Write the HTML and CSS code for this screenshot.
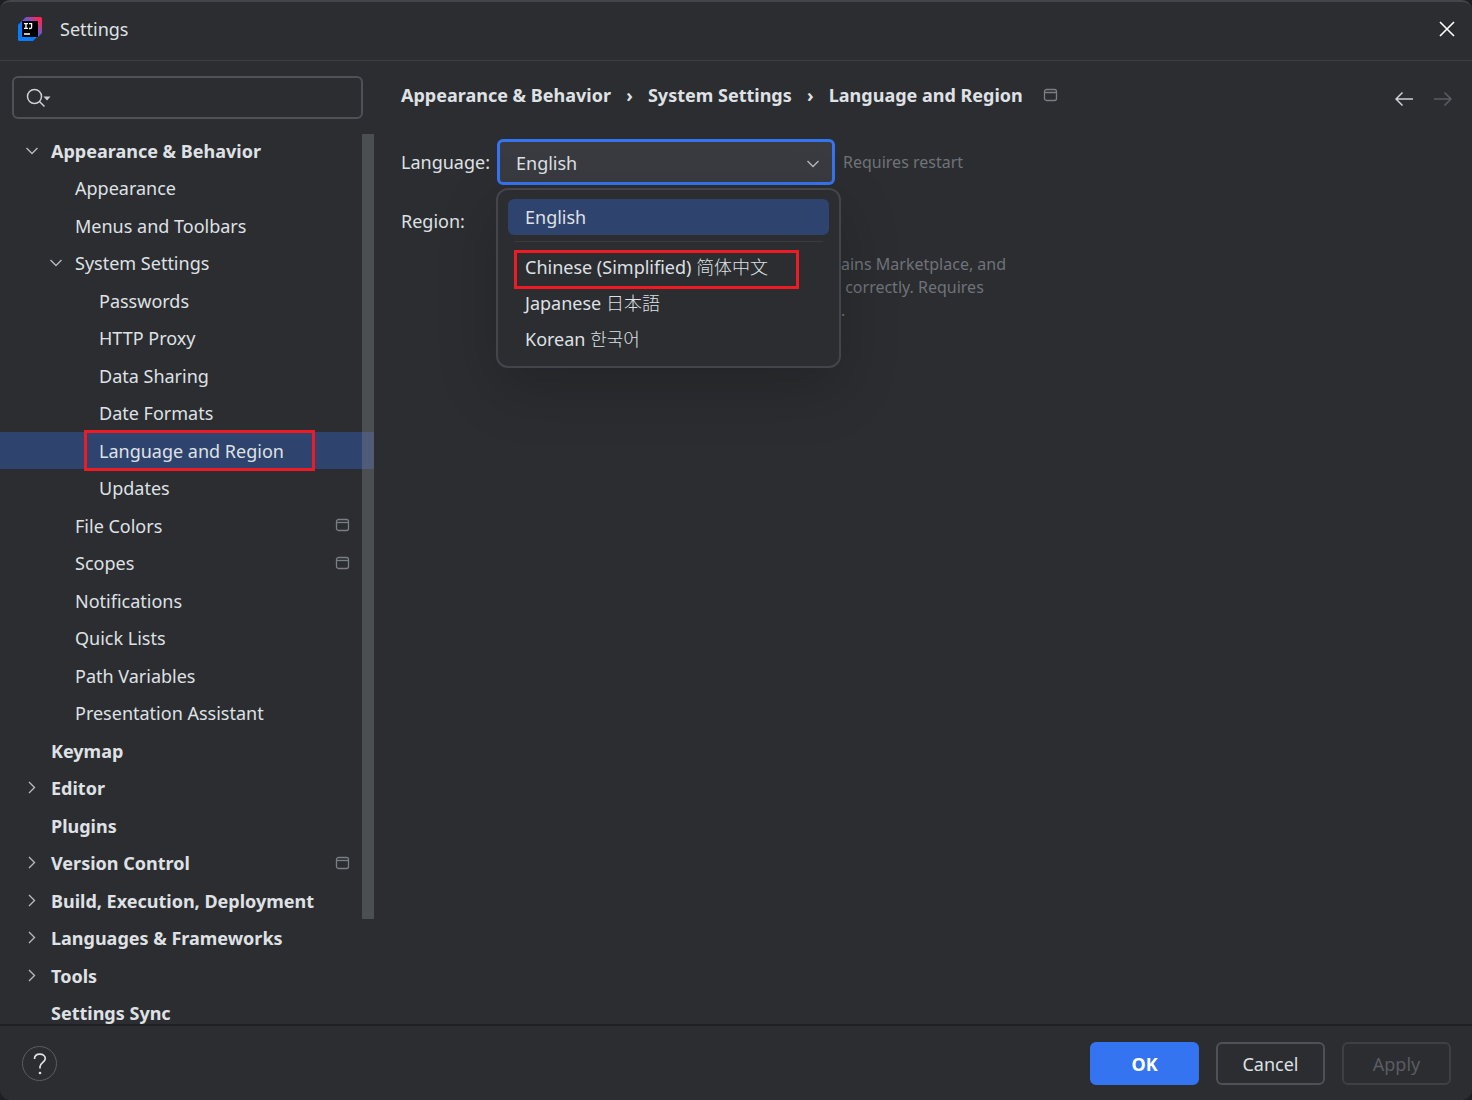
FILE: index.html
```html
<!DOCTYPE html>
<html lang="en">
<head>
<meta charset="utf-8">
<title>Settings</title>
<link rel="stylesheet" href="styles.css">
</head>
<body>
<svg class="defs" aria-hidden="true">
  <symbol id="down" viewBox="0 0 14 14"><path d="M1.500 4 7 9.500 12.500 4" fill="none" stroke="currentColor" stroke-width="1.400"/></symbol>
  <symbol id="right" viewBox="0 0 14 14"><path d="M4 1 9.500 6.500 4 12" fill="none" stroke="currentColor" stroke-width="1.400"/></symbol>
  <symbol id="project" viewBox="0 0 15 15"><rect x="1.500" y="1.500" width="12" height="11" rx="2" fill="none" stroke="currentColor" stroke-width="1.300"/><path d="M1.500 4.500h12" stroke="currentColor" stroke-width="1.300"/></symbol>
</svg>
<div class="window">
  <header class="titlebar">
    <svg class="logo" viewBox="0 0 24 24" aria-hidden="true">
      <defs>
        <linearGradient id="warm" x1="0.200" y1="0.300" x2="0.800" y2="0.100"><stop offset="0" stop-color="#6b57d2"/><stop offset="1" stop-color="#ff2456"/></linearGradient>
        <linearGradient id="cool" x1="0" y1="0" x2="0" y2="1"><stop offset="0" stop-color="#ff2456"/><stop offset="1" stop-color="#3b6cf0"/></linearGradient>
      </defs>
      <path d="M0 8 4 4h15v16l-4 4H1.500A1.500 1.500 0 0 1 0 22.500Z" fill="#087cfa"/>
      <path d="M3 5 8 0h14.500A1.500 1.500 0 0 1 24 1.500V6H3Z" fill="url(#warm)"/>
      <path d="M19 4h5v12l-5 5Z" fill="url(#cool)"/>
      <path d="M4 4h16v16H4z" fill="#000"/>
      <path d="M6 6.700h4M8 6.700v5M6 11.300h4M11 6.700h2.600v3.500q0 1.300-1.400 1.300h-1.200M6 17h6" fill="none" stroke="#fff" stroke-width="1.300"/>
    </svg>
    <h1 class="title">Settings</h1>
    <button class="icon-button close" aria-label="Close"><svg width="16" height="16" viewBox="0 0 16 16"><path d="m1 1 14 14M15 1 1 15" stroke="currentColor" stroke-width="1.600"/></svg></button>
  </header>

  <main class="body">
    <aside class="sidebar">
      <div class="search">
        <svg width="26" height="20" viewBox="0 0 26 20" aria-hidden="true"><circle cx="8.500" cy="8.500" r="7" fill="none" stroke="currentColor" stroke-width="1.500"/><path d="m13.500 13.500 5 5" stroke="currentColor" stroke-width="1.500"/><path d="M17.500 8.500h7L21 12.500Z" fill="currentColor"/></svg>
        <input type="text" aria-label="Search settings">
      </div>
      <nav class="tree-pane" aria-label="Settings">
        <ul class="tree">
          <li class="row group"><svg class="arrow"><use href="#down"/></svg><a href="#">Appearance &amp; Behavior</a></li>
          <li class="row level-2"><a href="#">Appearance</a></li>
          <li class="row level-2"><a href="#">Menus and Toolbars</a></li>
          <li class="row level-2"><svg class="arrow"><use href="#down"/></svg><a href="#">System Settings</a></li>
          <li class="row level-3"><a href="#">Passwords</a></li>
          <li class="row level-3"><a href="#">HTTP Proxy</a></li>
          <li class="row level-3"><a href="#">Data Sharing</a></li>
          <li class="row level-3"><a href="#">Date Formats</a></li>
          <li class="row level-3 selected"><a href="#" aria-current="page">Language and Region</a><span class="marker"></span></li>
          <li class="row level-3"><a href="#">Updates</a></li>
          <li class="row level-2"><a href="#">File Colors</a><svg class="scope"><use href="#project"/></svg></li>
          <li class="row level-2"><a href="#">Scopes</a><svg class="scope"><use href="#project"/></svg></li>
          <li class="row level-2"><a href="#">Notifications</a></li>
          <li class="row level-2"><a href="#">Quick Lists</a></li>
          <li class="row level-2"><a href="#">Path Variables</a></li>
          <li class="row level-2"><a href="#">Presentation Assistant</a></li>
          <li class="row group"><a href="#">Keymap</a></li>
          <li class="row group"><svg class="arrow"><use href="#right"/></svg><a href="#">Editor</a></li>
          <li class="row group"><a href="#">Plugins</a></li>
          <li class="row group"><svg class="arrow"><use href="#right"/></svg><a href="#">Version Control</a><svg class="scope"><use href="#project"/></svg></li>
          <li class="row group"><svg class="arrow"><use href="#right"/></svg><a href="#">Build, Execution, Deployment</a></li>
          <li class="row group"><svg class="arrow"><use href="#right"/></svg><a href="#">Languages &amp; Frameworks</a></li>
          <li class="row group"><svg class="arrow"><use href="#right"/></svg><a href="#">Tools</a></li>
          <li class="row group"><a href="#">Settings Sync</a></li>
        </ul>
        <div class="scrollbar"></div>
      </nav>
    </aside>

    <section class="content">
      <div class="content-head">
        <nav class="breadcrumbs" aria-label="Breadcrumbs">
          <a href="#">Appearance &amp; Behavior</a><span class="sep">›</span><a href="#">System Settings</a><span class="sep">›</span><a href="#">Language and Region</a>
          <svg class="scope"><use href="#project"/></svg>
        </nav>
        <div class="history">
          <button class="icon-button" aria-label="Back"><svg width="18" height="14" viewBox="0 0 18 14"><path d="M18 7H1M7.500.500 1 7l6.500 6.500" fill="none" stroke="currentColor" stroke-width="1.500"/></svg></button>
          <button class="icon-button" aria-label="Forward" disabled><svg width="18" height="14" viewBox="0 0 18 14"><path d="M0 7h17M10.500.500 17 7l-6.500 6.500" fill="none" stroke="currentColor" stroke-width="1.500"/></svg></button>
        </div>
      </div>
      <div class="form">
        <label for="language">Language:</label>
        <div class="combo">
          <select id="language"><option>English</option></select>
          <svg class="arrow"><use href="#down"/></svg>
          <ul class="popup" role="listbox" aria-label="Language">
            <li class="option active" role="option" aria-selected="true">English</li>
            <li class="divider" role="separator"></li>
            <li class="option" role="option">Chinese (Simplified) <span class="native" lang="zh">简体中文</span><span class="marker"></span></li>
            <li class="option" role="option">Japanese <span class="native" lang="ja">日本語</span></li>
            <li class="option" role="option">Korean <span class="native" lang="ko">한국어</span></li>
          </ul>
        </div>
        <span class="hint">Requires restart</span>
        <span class="region-label">Region:</span>
        <p class="hint region-hint">ains Marketplace, and
 correctly. Requires
.</p>
      </div>
    </section>
  </main>

  <footer class="footer">
    <button class="help" aria-label="Help"><svg width="14" height="22" viewBox="0 0 14 22"><path d="M1.500 6C1.500 3 3.700 1.200 6.800 1.200S12.300 3 12.300 5.600c0 3.600-5.300 4-5.300 8.200v1.700" fill="none" stroke="currentColor" stroke-width="1.700"/><circle cx="7" cy="20" r="1.300" fill="currentColor"/></svg></button>
    <div class="actions">
      <button class="button primary">OK</button>
      <button class="button">Cancel</button>
      <button class="button" disabled>Apply</button>
    </div>
  </footer>
</div>
</body>
</html>
```
FILE: styles.css
```css
* { box-sizing: border-box; }

body {
  margin: 0;
  background: #1e1f22;
  color: #dfe1e5;
  font: 18px/24px "Noto Sans", "Open Sans", "Noto Sans CJK SC", sans-serif;
}

a { color: inherit; text-decoration: none; }
ul { list-style: none; margin: 0; padding: 0; }
button, input, select { font: inherit; color: inherit; }
.defs { position: absolute; width: 0; height: 0; }

.window {
  display: flex;
  flex-direction: column;
  height: 100vh;
  overflow: hidden;
  background: #2b2d30;
  border-top: 2px solid #43454a;
  border-radius: 10px;
}

.titlebar {
  display: flex;
  align-items: center;
  flex: none;
  height: 59px;
  padding: 0 17px 4px 18px;
  border-bottom: 1px solid #3c3e41;
}
.logo { width: 24px; height: 24px; }
.title { margin: 0 auto 0 18px; font-size: 18px; font-weight: 400; }

.icon-button {
  display: flex;
  padding: 0;
  border: 0;
  background: none;
  color: #ced0d6;
}
.icon-button:disabled { color: #5a5d63; }
.close { color: #fff; }

.body { display: flex; flex: 1; min-height: 0; }

.sidebar {
  display: flex;
  flex-direction: column;
  flex: none;
  width: 374px;
  padding-top: 15px;
}
.search {
  display: flex;
  align-items: center;
  flex: none;
  height: 43px;
  margin: 0 11px 13px 12px;
  padding: 0 12px;
  border: 2px solid #4e5157;
  border-radius: 6px;
  color: #ced0d6;
}
.search input {
  flex: 1;
  min-width: 0;
  border: 0;
  outline: 0;
  background: none;
}

.tree-pane { position: relative; flex: 1; min-height: 0; overflow: hidden; }
.row {
  position: relative;
  display: flex;
  align-items: center;
  height: 37px;
  padding-left: 51px;
  padding-right: 24px;
}
.row:nth-child(even) { height: 38px; }
.row.level-2 { padding-left: 75px; }
.row.level-3 { padding-left: 99px; }
.row.group { font-weight: 700; }
.row.selected { background: #2e436e; }
.arrow { flex: none; width: 14px; height: 14px; color: #b4b8bf; }
.row .arrow { margin-left: -26px; margin-right: 12px; }
.scope { flex: none; width: 15px; height: 15px; color: #7a7e85; }
.row .scope { margin-left: auto; }
.scrollbar {
  position: absolute;
  top: 2px;
  right: 0;
  width: 12px;
  height: 88%;
  background: rgba(128, 130, 133, 0.4);
}

/* Red callout frames */
.marker { position: absolute; border: 3px solid #ed1c24; }
.row .marker { left: 84px; top: -2px; width: 231px; height: 41px; }
.option .marker { left: 6px; top: 2px; width: 285px; height: 39px; }

.content { flex: 1; min-width: 0; padding: 20px 20px 0 27px; }
.content-head { display: flex; justify-content: space-between; height: 30px; }
.breadcrumbs { display: flex; align-items: center; height: 28px; font-weight: 700; }
.sep { width: 37px; text-align: center; }
.breadcrumbs .scope { margin-left: 20px; }
.history { display: flex; gap: 21px; align-items: flex-end; height: 25px; }

.form {
  display: grid;
  grid-template-columns: 96px 338px 1fr;
  grid-template-rows: 46px auto auto;
  align-items: center;
  margin-top: 28px;
}
.combo { position: relative; align-self: stretch; }
.combo select {
  width: 100%;
  height: 46px;
  padding: 2px 16px 0;
  border: 3px solid #3574f0;
  border-radius: 6px;
  outline: 0;
  background: #393b40;
  appearance: none;
}
.combo > .arrow { position: absolute; right: 15px; top: 18px; }
.popup {
  position: absolute;
  z-index: 1;
  top: 49px;
  left: -1px;
  width: 345px;
  height: 180px;
  padding: 9px 10px;
  border: 2px solid #43454a;
  border-radius: 12px;
  background: #2b2d30;
  box-shadow: 0 20px 60px rgba(0, 0, 0, 0.2);
}
.option { position: relative; height: 36px; padding: 0 17px; line-height: 36px; white-space: nowrap; }
.option.active { border-radius: 6px; background: #2e436e; }
.divider { height: 1px; margin: 6px 6px 6px; background: #393b40; }
.native { font-family: "Noto Sans CJK SC", sans-serif; font-weight: 300; }
.native:lang(ja) { font-family: "Noto Sans CJK JP", sans-serif; }
.native:lang(ko) { font-family: "Noto Sans CJK KR", sans-serif; }

.hint { padding-left: 8px; font-size: 16px; line-height: 23px; color: #6f737a; }
.region-label { grid-area: 2 / 1; margin-top: 24px; }
.region-hint { grid-area: 3 / 3; margin: 20px 0 0; padding-left: 6px; white-space: pre; }

.footer {
  display: flex;
  align-items: center;
  justify-content: space-between;
  flex: none;
  height: 76px;
  padding: 1px 21px 0 22px;
  border-top: 2px solid #1e1f22;
}
.help {
  display: flex;
  align-items: center;
  justify-content: center;
  width: 35px;
  height: 35px;
  padding: 0;
  border: 1px solid #5a5d63;
  border-radius: 50%;
  background: none;
}
.actions { display: flex; gap: 17px; }
.button {
  width: 109px;
  height: 43px;
  padding: 0;
  border: 2px solid #4e5157;
  border-radius: 6px;
  background: none;
}
.button.primary { border-color: #3574f0; background: #3574f0; color: #fff; font-weight: 700; }
.button:disabled { border-color: #3e4044; color: #5a5d63; }
```
